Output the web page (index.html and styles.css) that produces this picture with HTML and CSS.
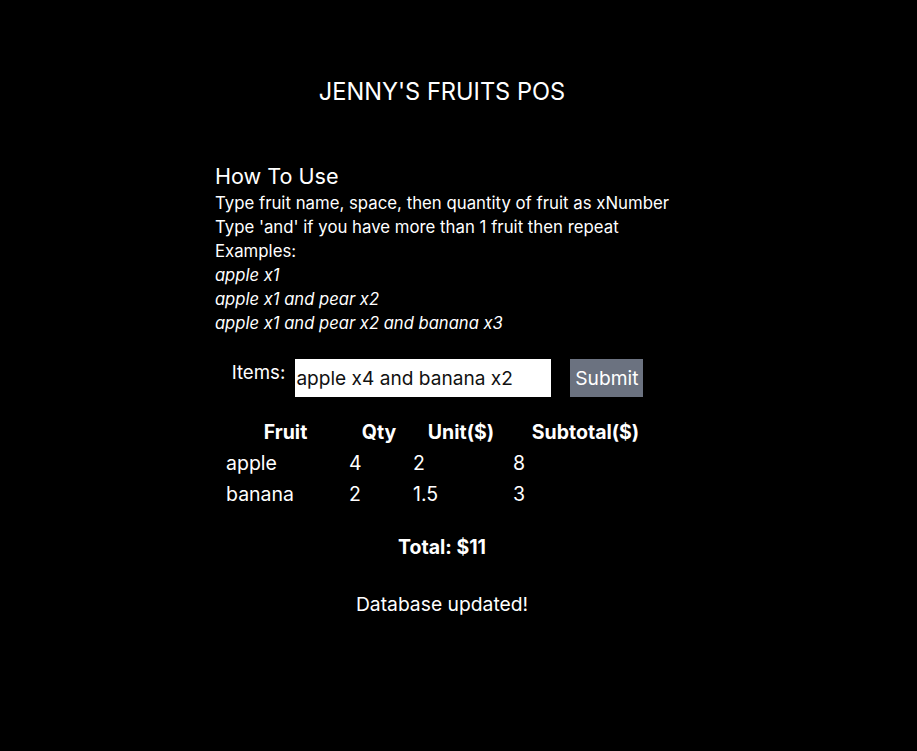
FILE: index.html
```
<!DOCTYPE html>
<html>
<head>
<meta charset="utf-8">
<link rel="stylesheet" href="styles.css">
</head>
<body>
<div class="app">
  <h1 class="title">JENNY'S FRUITS POS</h1>
  <div class="help">
    <h2 class="help-title">How To Use</h2>
    <p class="line">Type fruit name, space, then quantity of fruit as xNumber</p>
    <p class="line">Type 'and' if you have more than 1 fruit then repeat</p>
    <p class="line">Examples:</p>
    <p class="line ex">apple x1</p>
    <p class="line ex">apple x1 and pear x2</p>
    <p class="line ex">apple x1 and pear x2 and banana x3</p>
  </div>
  <form class="form">
    <label class="label">Items:</label>
    <input class="input" type="text" value="apple x4 and banana x2">
    <button class="btn" type="button">Submit</button>
  </form>
  <table class="table">
    <thead>
      <tr><th class="c1">Fruit</th><th class="c2">Qty</th><th class="c3">Unit($)</th><th class="c4">Subtotal($)</th></tr>
    </thead>
    <tbody>
      <tr><td>apple</td><td>4</td><td>2</td><td>8</td></tr>
      <tr><td>banana</td><td>2</td><td>1.5</td><td>3</td></tr>
    </tbody>
  </table>
  <p class="total">Total: $11</p>
  <p class="status">Database updated!</p>
</div>
</body>
</html>
```
FILE: styles.css
```
html, body {
  margin: 0;
  padding: 0;
  background: #000;
  color: #fff;
  font-family: Inter, "Noto Sans", sans-serif;
}
.app {
  width: 884px;
  display: flex;
  flex-direction: column;
  align-items: center;
  padding-top: 76px;
}
.title {
  margin: 0;
  font-family: Inter, sans-serif;
  font-weight: 400;
  font-size: 23.6px;
  line-height: 32px;
}
.help {
  margin-top: 53px;
}
.help-title {
  margin: 0;
  font-size: 21.6px;
  font-weight: 400;
  line-height: 30px;
}
.line {
  margin: 0;
  font-size: 16.8px;
  line-height: 24px;
}
.ex {
  font-style: italic;
  font-size: 16.6px;
}
.form {
  display: flex;
  align-items: flex-start;
  margin: 24px 9px 0 0;
}
.label {
  font-size: 18.7px;
  line-height: 28px;
  margin-right: 10px;
}
.input {
  width: 256px;
  height: 38px;
  box-sizing: border-box;
  border: none;
  outline: none;
  padding: 0 1px;
  margin: 0;
  font-family: Inter, sans-serif;
  font-size: 19.1px;
  color: #111;
  background: #fff;
}
.btn {
  margin-left: 19px;
  height: 38px;
  width: 73px;
  border: none;
  padding: 0;
  background: #6b7280;
  color: #fff;
  font-family: Inter, sans-serif;
  font-size: 19.2px;
}
.table {
  margin-top: 19px;
  font-size: 19.5px;
  border-spacing: 2px;
}
.table th, .table td {
  padding: 1px;
  line-height: 27px;
}
.table th {
  font-weight: 700;
  text-align: center;
}
.table td {
  text-align: left;
}
.c1 { width: 119px; }
.c2 { width: 60px; }
.c3 { width: 96px; }
.c4 { width: 145px; }
.total {
  margin: 22px 0 0;
  font-size: 19.5px;
  font-weight: 700;
  line-height: 28px;
}
.status {
  margin: 29px 0 0;
  font-size: 19.3px;
  line-height: 28px;
}
```
